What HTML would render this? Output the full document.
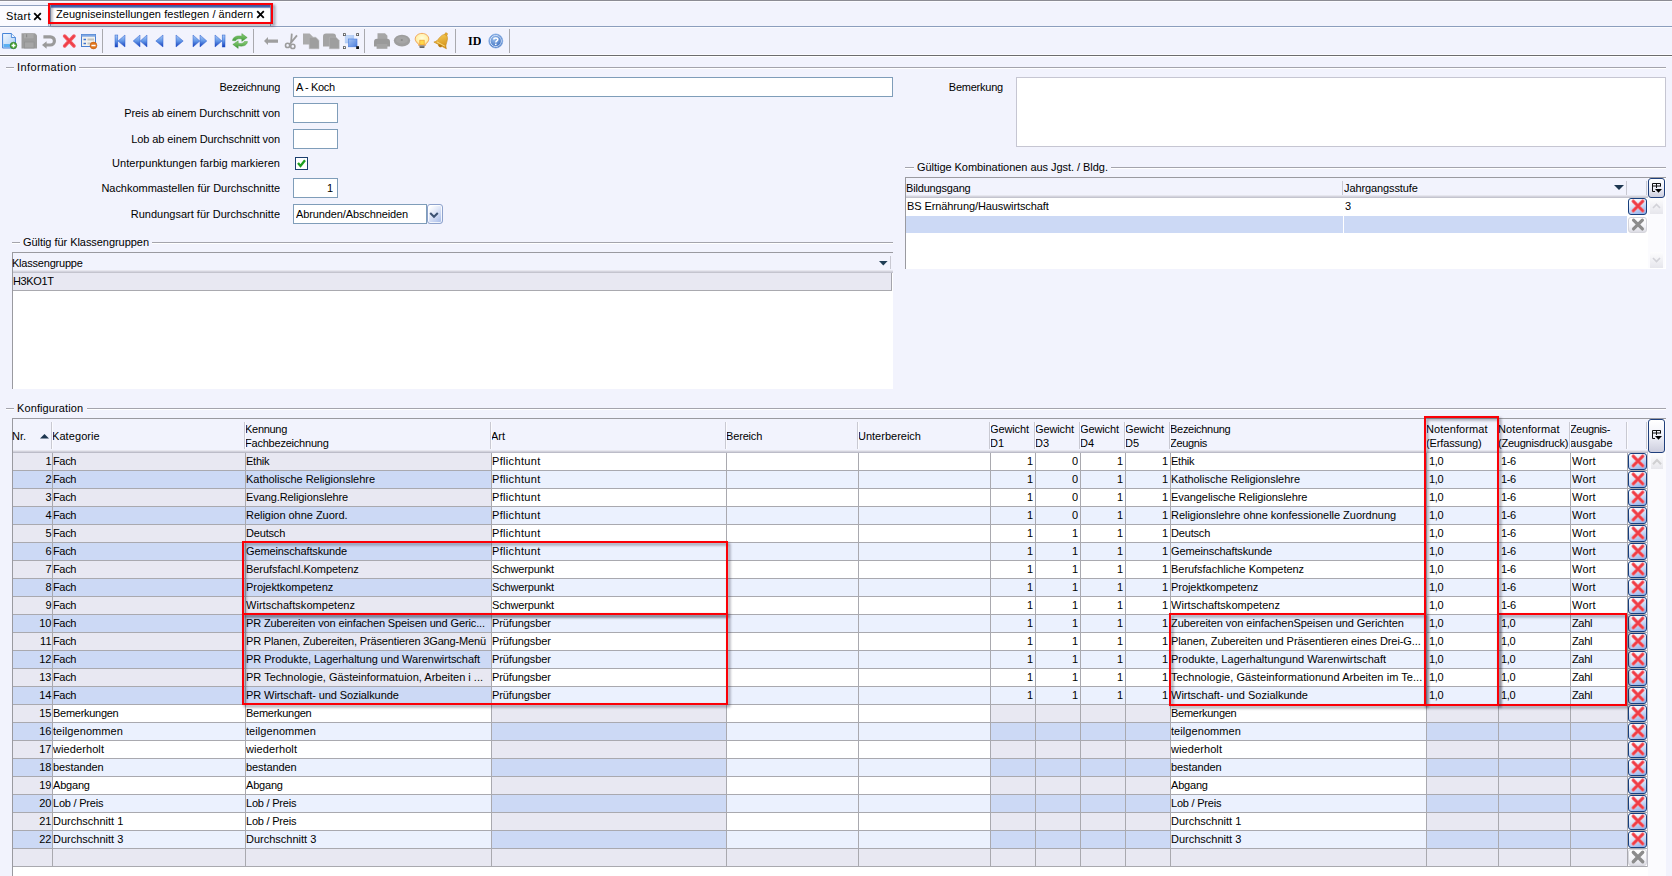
<!DOCTYPE html><html lang="de"><head><meta charset="utf-8"><title>Zeugniseinstellungen festlegen / ändern</title><style>
html,body{margin:0;padding:0;}
body{width:1672px;height:876px;overflow:hidden;background:#f2f3fd;font-family:"Liberation Sans",sans-serif;font-size:11px;color:#000;position:relative;}
div{position:absolute;box-sizing:border-box;}
.t{white-space:nowrap;overflow:hidden;}
.r{text-align:right;}
svg{position:absolute;overflow:visible;}
.inp{background:#fff;border:1px solid #7f9db9;}
.gl{background:#a9a9af;height:1px;}
.hs{background:#c9c9d2;width:1px;}
.red{border:2px solid #fb0007;filter:drop-shadow(2px 2px 1.5px rgba(40,40,60,.55));}
.del{border:1px solid #173e7c;border-radius:3px;background:linear-gradient(160deg,#ffffff 5%,#dfe8fa 40%,#8aaae8 100%);}
.delg{border:1px solid #d5d5dc;border-radius:3px;background:linear-gradient(#ffffff 0%,#f4f4f8 60%,#dcdce4 100%);}
</style></head><body>
<svg width="0" height="0" style="left:0;top:0"><defs>
<linearGradient id="gb" x1="0" y1="0" x2="0" y2="1"><stop offset="0" stop-color="#8fb4ee"/><stop offset="1" stop-color="#1b55c0"/></linearGradient>
<linearGradient id="gg" x1="0" y1="0" x2="0" y2="1"><stop offset="0" stop-color="#b9b9b9"/><stop offset="1" stop-color="#8d8d8d"/></linearGradient>
<symbol id="xr" viewBox="0 0 19 17"><path d="M5.3 3.3 L14.7 12.7 M14.7 3.3 L5.3 12.7" stroke="#f67a80" stroke-width="3.7" stroke-linecap="round" fill="none"/><path d="M5.3 3.3 L14.7 12.7 M14.7 3.3 L5.3 12.7" stroke="#ee3b45" stroke-width="2" stroke-linecap="round" fill="none"/></symbol>
<symbol id="xg" viewBox="0 0 19 17"><path d="M5.3 3.3 L14.7 12.7 M14.7 3.3 L5.3 12.7" stroke="#8c8c8c" stroke-width="3.4" stroke-linecap="round" fill="none"/></symbol>
</defs></svg>
<div style="left:0px;top:0px;width:1672px;height:1px;background:#8c8c94;"></div>
<div style="left:0px;top:1px;width:1672px;height:1px;background:#fbfbff;"></div>
<div style="left:0px;top:26px;width:1672px;height:1px;background:#8c9ebd;"></div>
<div style="left:0px;top:27px;width:1672px;height:1px;background:#fbfbff;"></div>
<div style="left:0px;top:5px;width:49px;height:21px;background:#fbfbff;border-top:1px solid #8e9fbf;border-right:1px solid #a9b7d2;"></div>
<div class="t" style="left:6px;top:8px;height:16px;line-height:16px;letter-spacing:0.35px;">Start</div>
<svg style="left:33px;top:11.5px" width="9" height="9" viewBox="0 0 9 9"><path d="M1.2 1.2 L7.8 7.8 M7.8 1.2 L1.2 7.8" stroke="#000" stroke-width="1.8" fill="none"/></svg>
<div style="left:50px;top:5px;width:221px;height:21px;background:linear-gradient(#3f63c0 0,#5b7fd6 2px,#ffffff 3.5px,#ffffff 100%);border-left:1px solid #8e9fbf;border-right:1px solid #8e9fbf;"></div>
<div class="t" style="left:56px;top:6px;height:16px;line-height:16px;letter-spacing:0.054px;">Zeugniseinstellungen festlegen / ändern</div>
<svg style="left:255.5px;top:9.5px" width="9" height="9" viewBox="0 0 9 9"><path d="M1.2 1.2 L7.8 7.8 M7.8 1.2 L1.2 7.8" stroke="#000" stroke-width="1.8" fill="none"/></svg>
<div class="red" style="left:48px;top:3px;width:225px;height:21px;"></div>
<div style="left:0px;top:54px;width:1672px;height:1px;background:#fbfbff;"></div>
<div style="left:0px;top:55px;width:1672px;height:1px;background:#6c6c6e;"></div>
<div style="left:0px;top:56px;width:1672px;height:1px;background:#ffffff;"></div>
<div style="left:102px;top:29px;width:1px;height:24px;background:#a9a9ae;"></div>
<div style="left:253px;top:29px;width:1px;height:24px;background:#a9a9ae;"></div>
<div style="left:364px;top:29px;width:1px;height:24px;background:#a9a9ae;"></div>
<div style="left:455px;top:29px;width:1px;height:24px;background:#a9a9ae;"></div>
<div style="left:509px;top:29px;width:1px;height:24px;background:#a9a9ae;"></div>
<svg style="left:0;top:28px" width="520" height="26" viewBox="0 28 520 26">
<defs>
<linearGradient id="nb" x1="0" y1="0" x2="0" y2="1"><stop offset="0" stop-color="#a9caf5"/><stop offset="0.5" stop-color="#6398e8"/><stop offset="1" stop-color="#1238b8"/></linearGradient>
<linearGradient id="pg" x1="0" y1="0" x2="1" y2="1"><stop offset="0" stop-color="#f4f9ff"/><stop offset="1" stop-color="#a9cbf2"/></linearGradient>
<linearGradient id="gr" x1="0" y1="0" x2="0" y2="1"><stop offset="0" stop-color="#b4b4b4"/><stop offset="1" stop-color="#8f8f8f"/></linearGradient>
<linearGradient id="sq1" x1="0" y1="0" x2="1" y2="1"><stop offset="0" stop-color="#cfe0fa"/><stop offset="1" stop-color="#9dbdf0"/></linearGradient>
<linearGradient id="sq2" x1="0" y1="0" x2="1" y2="1"><stop offset="0" stop-color="#a6c3f2"/><stop offset="1" stop-color="#4d7fdc"/></linearGradient>
<linearGradient id="gn" x1="0" y1="0" x2="0" y2="1"><stop offset="0" stop-color="#8fd07a"/><stop offset="1" stop-color="#3f9a38"/></linearGradient>
<radialGradient id="hp" cx="0.4" cy="0.35" r="0.7"><stop offset="0" stop-color="#9cc0ee"/><stop offset="1" stop-color="#2f63b8"/></radialGradient>
<radialGradient id="bl" cx="0.5" cy="0.4" r="0.6"><stop offset="0" stop-color="#fffde0"/><stop offset="0.7" stop-color="#fff0a8"/><stop offset="1" stop-color="#f6c070"/></radialGradient>
<linearGradient id="be" x1="0" y1="0" x2="1" y2="1"><stop offset="0" stop-color="#fbd560"/><stop offset="1" stop-color="#d08a10"/></linearGradient>
</defs>
<!-- new document -->
<path d="M2.6 33.5 H11.4 L15.4 37.5 V48 H2.6 Z" fill="url(#pg)" stroke="#4584d8" stroke-width="1" stroke-linejoin="round"/>
<path d="M11.4 33.5 V37.5 H15.4" fill="#eef5ff" stroke="#4584d8" stroke-width="0.9"/>
<rect x="3.6" y="44" width="8" height="3" fill="#5cb0f2"/>
<circle cx="13.5" cy="45.5" r="3.3" fill="#46a030" stroke="#2d7a20" stroke-width="0.6"/>
<path d="M11.5 45.5 H15.5 M13.5 43.5 V47.5" stroke="#fff" stroke-width="1.5"/>
<!-- save (disabled) -->
<path d="M21.5 33.3 H35 L37 35.3 V48.5 H21.5 Z" fill="#9c9c9c"/>
<rect x="24" y="33.3" width="9.5" height="5" fill="#a9a9a9"/>
<rect x="26" y="34.3" width="1.2" height="3" fill="#8a8a8a"/>
<rect x="24.5" y="42" width="9.5" height="6" fill="#a6a6a6" stroke="#8e8e8e" stroke-width="0.6"/>
<!-- undo (disabled) -->
<path d="M43.4 35.2 H50.3 A5.7 5.7 0 0 1 50.3 46.6 H46.6 V48.8 L42 45 L46.6 41.2 V43.4 H50.3 A2.5 2.5 0 0 0 50.3 38.4 H43.4 Z" fill="#9a9a9a"/>
<!-- red X -->
<path d="M64.6 36 L74 46 M74 36 L64.6 46" stroke="#f25a62" stroke-width="3.5" stroke-linecap="round"/>
<path d="M64.6 36 L74 46 M74 36 L64.6 46" stroke="#f03a44" stroke-width="1.4" stroke-linecap="round"/>
<!-- form minus -->
<rect x="81.5" y="34.5" width="14" height="12" fill="#f3f2ee" stroke="#4a7fd0" stroke-width="1"/>
<rect x="81.5" y="34.5" width="14" height="2.2" fill="#7fa8e4"/>
<path d="M83.5 39.5 H86 M83.5 43.5 H86" stroke="#3f74d0" stroke-width="1.3"/>
<path d="M87.5 39.5 H94 M87.5 43.5 H91" stroke="#c4c4c0" stroke-width="2"/>
<circle cx="93.5" cy="45.5" r="3.4" fill="#e2761c" stroke="#c25a0c" stroke-width="0.6"/>
<path d="M91.4 45.5 H95.6" stroke="#fff" stroke-width="1.5"/>
<!-- nav icons -->
<g fill="url(#nb)" stroke="#2c5fd0" stroke-width="0.5">
<rect x="115" y="35" width="2.8" height="12"/><path d="M125 35 V47 L118 41 Z"/>
<path d="M140 35 V47 L133.2 41 Z"/><path d="M147 35 V47 L140.2 41 Z"/>
<path d="M163 35 V47 L155.8 41 Z"/>
<path d="M176 35 V47 L183.2 41 Z"/>
<path d="M193 35 V47 L199.8 41 Z"/><path d="M200 35 V47 L206.8 41 Z"/>
<path d="M215 35 V47 L222 41 Z"/><rect x="222.2" y="35" width="2.8" height="12"/>
</g>
<!-- refresh -->
<g fill="url(#gn)" stroke="#3a9030" stroke-width="0.4">
<path d="M232.5 40.6 C233 36.6 237 35.2 241.8 36.2 V33.6 L247.2 37.6 L241.8 41.4 V39 C238.6 38.4 236.6 38.8 235.6 40.8 Z"/>
<path d="M247.5 41.6 C247 45.6 243 46.8 238.2 45.8 V48.4 L232.8 44.4 L238.2 40.8 V43.2 C241.4 43.8 243.4 43.4 244.4 41.4 Z"/>
</g>
<!-- back arrow (disabled) -->
<path d="M264 41 L268 37 V39.4 H278 V42.8 H268 V45 Z" fill="#9f9f9f"/>
<!-- scissors (disabled) -->
<g stroke="#9c9c9c" fill="none">
<path d="M291.8 33.6 L291 43.4 M297 35.4 L289.6 44.4" stroke-width="1.8"/>
<circle cx="287.6" cy="45.4" r="2.1" stroke-width="1.6"/>
<circle cx="292.8" cy="46.4" r="2.1" stroke-width="1.6"/>
</g>
<!-- copy (disabled) -->
<path d="M303 33.5 H309.6 L312.6 36.5 V44.6 H303 Z" fill="#ababab"/>
<path d="M309.2 37.2 H315.8 L319 40.4 V48.8 H309.2 Z" fill="#9e9e9e" stroke="#b8b8b8" stroke-width="0.5"/>
<!-- paste (disabled) -->
<path d="M323 36.5 Q323 33.5 326 33.5 H333 Q336 33.5 336 36.5 V46.5 H323 Z" fill="#a4a4a4"/>
<path d="M329.4 37.2 H336 L339.2 40.4 V48.8 H329.4 Z" fill="#9e9e9e" stroke="#b8b8b8" stroke-width="0.5"/>
<!-- select all -->
<rect x="345.2" y="35.4" width="8.6" height="7.6" fill="url(#sq1)" stroke="#a9c6f4" stroke-width="0.6"/>
<rect x="348.4" y="39" width="8.6" height="7.8" fill="url(#sq2)" stroke="#4a7cdc" stroke-width="0.6"/>
<g fill="#fff" stroke="#555" stroke-width="0.8">
<rect x="343.4" y="33.6" width="2" height="2"/><rect x="356.6" y="33.6" width="2" height="2"/><rect x="343.4" y="46.6" width="2" height="2"/></g>
<rect x="356.2" y="46.2" width="2.8" height="2.8" fill="#111"/>
<!-- printer (disabled) -->
<path d="M377.5 33.3 H385 L387.4 35.8 V40 H377.5 Z" fill="#a6a6a6"/>
<path d="M374 42 Q374 38.8 377 38.8 H387 Q390 38.8 390 42 V46.6 H374 Z" fill="#9a9a9a"/>
<rect x="376.6" y="44" width="10.8" height="4.8" fill="#a4a4a4"/>
<!-- oval (disabled) -->
<ellipse cx="402" cy="40.6" rx="8.2" ry="5.8" fill="#9e9e9e"/>
<ellipse cx="402" cy="40" rx="6" ry="3.6" fill="#a6a6a6"/>
<circle cx="401.8" cy="40" r="1.1" fill="#8a8a8a"/>
<!-- bulb -->
<path d="M422 33.4 C426 33.4 428.8 36 428.8 39.2 C428.8 41.6 426.6 42.8 425.6 44.6 V45.4 H418.6 V44.6 C417.6 42.8 415.2 41.6 415.2 39.2 C415.2 36 418 33.4 422 33.4 Z" fill="url(#bl)" stroke="#f0a254" stroke-width="0.9"/>
<rect x="419.8" y="40.2" width="4.4" height="4.6" fill="#ffd84a" stroke="#f0a030" stroke-width="0.7"/>
<rect x="419.2" y="45.2" width="5.6" height="2.6" fill="#9a9a9a"/>
<rect x="420" y="46.6" width="4" height="1.2" fill="#555"/>
<!-- bell -->
<g transform="translate(1 0) rotate(28 441.5 41)">
<path d="M441.5 33.6 C444.8 34.6 445.6 38.6 446.2 42 C446.6 44 447.6 45 448.6 46 H434.4 C435.4 45 436.4 44 436.8 42 C437.4 38.6 438.2 34.6 441.5 33.6 Z" fill="url(#be)" stroke="#c98a18" stroke-width="0.6"/>
<circle cx="441.5" cy="33.2" r="1.3" fill="#e9ae2c" stroke="#c98a18" stroke-width="0.5"/>
<ellipse cx="441.5" cy="46.4" rx="2" ry="1.3" fill="#b87a10"/>
<path d="M437 44.4 H446" stroke="#fbe08a" stroke-width="0.8"/>
</g>
<!-- help -->
<circle cx="495.8" cy="41" r="7" fill="url(#hp)" stroke="#88aee4" stroke-width="0.8"/>
<circle cx="495.8" cy="41" r="5.6" fill="none" stroke="#dbe8fa" stroke-width="0.9"/>
<path d="M493.8 39.4 C493.8 37.4 497.8 37.4 497.8 39.4 C497.8 40.8 495.8 40.8 495.8 42.4" fill="none" stroke="#fff" stroke-width="1.5"/>
<circle cx="495.8" cy="44.3" r="0.9" fill="#fff"/>
</svg>
<div class="t" style="left:468px;top:33px;height:16px;line-height:16px;font-family:'Liberation Serif',serif;font-weight:bold;font-size:12px;">ID</div>

<div style="left:6px;top:67px;width:8px;height:1px;background:#a4a4ac;"></div>
<div style="left:6px;top:68px;width:8px;height:1px;background:#ffffff;"></div>
<div class="t" style="left:17px;top:59px;height:16px;line-height:16px;letter-spacing:0.399px;">Information</div>
<div style="left:79px;top:67px;width:1587px;height:1px;background:#a4a4ac;"></div>
<div style="left:79px;top:68px;width:1587px;height:1px;background:#ffffff;"></div>
<div style="left:12px;top:242px;width:8px;height:1px;background:#a4a4ac;"></div>
<div style="left:12px;top:243px;width:8px;height:1px;background:#ffffff;"></div>
<div class="t" style="left:23px;top:234px;height:16px;line-height:16px;letter-spacing:-0.049px;">Gültig für Klassengruppen</div>
<div style="left:152px;top:242px;width:741px;height:1px;background:#a4a4ac;"></div>
<div style="left:152px;top:243px;width:741px;height:1px;background:#ffffff;"></div>
<div style="left:905px;top:167px;width:9px;height:1px;background:#a4a4ac;"></div>
<div style="left:905px;top:168px;width:9px;height:1px;background:#ffffff;"></div>
<div class="t" style="left:917px;top:159px;height:16px;line-height:16px;letter-spacing:-0.044px;">Gültige Kombinationen aus Jgst. / Bldg.</div>
<div style="left:1111px;top:167px;width:555px;height:1px;background:#a4a4ac;"></div>
<div style="left:1111px;top:168px;width:555px;height:1px;background:#ffffff;"></div>
<div style="left:6px;top:408px;width:8px;height:1px;background:#a4a4ac;"></div>
<div style="left:6px;top:409px;width:8px;height:1px;background:#ffffff;"></div>
<div class="t" style="left:17px;top:400px;height:16px;line-height:16px;letter-spacing:0.108px;">Konfiguration</div>
<div style="left:87px;top:408px;width:1579px;height:1px;background:#a4a4ac;"></div>
<div style="left:87px;top:409px;width:1579px;height:1px;background:#ffffff;"></div>
<div class="t r" style="left:0px;top:79px;height:16px;line-height:16px;width:280px;letter-spacing:-0.289px;">Bezeichnung</div>
<div class="t r" style="left:0px;top:105px;height:16px;line-height:16px;width:280px;letter-spacing:-0.081px;">Preis ab einem Durchschnitt von</div>
<div class="t r" style="left:0px;top:131px;height:16px;line-height:16px;width:280px;letter-spacing:-0.101px;">Lob ab einem Durchschnitt von</div>
<div class="t r" style="left:0px;top:155px;height:16px;line-height:16px;width:280px;letter-spacing:0.032px;">Unterpunktungen farbig markieren</div>
<div class="t r" style="left:0px;top:180px;height:16px;line-height:16px;width:280px;letter-spacing:-0.034px;">Nachkommastellen für Durchschnitte</div>
<div class="t r" style="left:0px;top:206px;height:16px;line-height:16px;width:280px;">Rundungsart für Durchschnitte</div>
<div class="inp" style="left:293px;top:77px;width:600px;height:20px;"></div>
<div class="t" style="left:296px;top:79px;height:16px;line-height:16px;letter-spacing:-0.35px;">A - Koch</div>
<div class="inp" style="left:293px;top:103px;width:45px;height:20px;"></div>
<div class="inp" style="left:293px;top:129px;width:45px;height:20px;"></div>
<div style="left:295px;top:157px;width:13px;height:13px;background:#fff;border:1px solid #1c3f6e;"></div>
<svg style="left:297px;top:159px" width="9" height="9" viewBox="0 0 9 9"><path d="M1 4 L3.5 7 L8 1.2" stroke="#1fa01f" stroke-width="2.3" fill="none"/></svg>
<div class="inp" style="left:293px;top:178px;width:45px;height:20px;"></div>
<div class="t r" style="left:296px;top:180px;height:16px;line-height:16px;width:37px;">1</div>
<div class="inp" style="left:293px;top:204px;width:134px;height:20px;"></div>
<div class="t" style="left:296px;top:206px;height:16px;line-height:16px;letter-spacing:-0.118px;">Abrunden/Abschneiden</div>
<div style="left:427px;top:204px;width:16px;height:20px;border:1px solid #8ea2cc;border-radius:3px;background:linear-gradient(135deg,#ffffff 10%,#dfe6f8 45%,#a3b8e8 100%);box-shadow:inset 0 0 0 1px rgba(255,255,255,.8);"></div>
<svg style="left:429px;top:212px" width="10" height="7" viewBox="0 0 10 7"><path d="M1.2 1 L5 4.8 L8.8 1" stroke="#3d5273" stroke-width="2" fill="none"/></svg>
<div class="t r" style="left:0px;top:79px;height:16px;line-height:16px;width:1003px;letter-spacing:-0.229px;">Bemerkung</div>
<div style="left:1016px;top:77px;width:650px;height:70px;background:#fff;border:1px solid #c6c6d2;"></div>
<div style="left:12px;top:252px;width:881px;height:137px;background:#fff;border-left:1px solid #9a9aa0;border-top:1px solid #9a9aa0;"></div>
<div style="left:13px;top:253px;width:880px;height:17px;background:#f2f3fd;"></div>
<div class="t" style="left:12px;top:255px;height:16px;line-height:16px;letter-spacing:-0.214px;">Klassengruppe</div>
<svg style="left:879px;top:261px" width="9" height="5" viewBox="0 0 9 5"><path d="M0 0 L8.6 0 L4.3 4.4 Z" fill="#1f3d55"/></svg>
<div class="hs" style="left:890px;top:256px;width:1px;height:13px;"></div>
<div style="left:13px;top:270px;width:880px;height:1px;background:#e6e6ee;"></div>
<div style="left:13px;top:271px;width:880px;height:1px;background:#d4d4de;"></div>
<div style="left:13px;top:272px;width:880px;height:1px;background:#c4c4ce;"></div>
<div style="left:13px;top:273px;width:878px;height:17px;background:#e8e8f2;"></div>
<div class="gl" style="left:13px;top:290px;width:879px;height:1px;"></div>
<div style="left:891px;top:273px;width:1px;height:17px;background:#a4a4ac;"></div>
<div class="t" style="left:13px;top:273px;height:17px;line-height:17px;letter-spacing:-0.35px;">H3KO1T</div>
<div style="left:905px;top:177px;width:761px;height:92px;background:#fff;border-left:1px solid #9a9aa0;border-top:1px solid #9a9aa0;"></div>
<div style="left:906px;top:178px;width:742px;height:18px;background:#f2f3fd;"></div>
<div class="t" style="left:906px;top:180px;height:16px;line-height:16px;letter-spacing:-0.177px;">Bildungsgang</div>
<div class="t" style="left:1344px;top:180px;height:16px;line-height:16px;letter-spacing:-0.108px;">Jahrgangsstufe</div>
<div class="hs" style="left:1342px;top:181px;width:1px;height:14px;"></div>
<div class="hs" style="left:1626px;top:181px;width:1px;height:14px;"></div>
<div class="hs" style="left:1646px;top:181px;width:1px;height:14px;"></div>
<svg style="left:1614px;top:185px" width="10" height="5" viewBox="0 0 10 5"><path d="M0 0 L10 0 L5 5 Z" fill="#1d3650"/></svg>
<div style="left:906px;top:195px;width:742px;height:1px;background:#e6e6ee;"></div>
<div style="left:906px;top:196px;width:742px;height:1px;background:#d4d4de;"></div>
<div style="left:906px;top:197px;width:742px;height:1px;background:#c4c4ce;"></div>
<div class="t" style="left:907px;top:198px;height:17px;line-height:17px;letter-spacing:-0.097px;">BS Ernährung/Hauswirtschaft</div>
<div class="t" style="left:1345px;top:198px;height:17px;line-height:17px;">3</div>
<div style="left:906px;top:216px;width:437px;height:17px;background:#ccd9f5;"></div>
<div style="left:1344px;top:216px;width:283px;height:17px;background:#ccd9f5;"></div>
<div class="del" style="left:1628px;top:198px;width:19px;height:17px;"></div>
<svg style="left:1628px;top:198px" width="19" height="17"><use href="#xr" width="19" height="17"/></svg>
<div class="delg" style="left:1628px;top:217px;width:19px;height:16px;"></div>
<svg style="left:1628px;top:217px" width="19" height="16"><use href="#xg" width="19" height="16"/></svg>
<div style="left:1648px;top:178px;width:17px;height:20px;border:1px solid #1f3f7c;border-radius:3px;background:linear-gradient(#ffffff,#f2f3fa 45%,#cdcede);"></div>
<svg style="left:1652px;top:183px" width="11" height="11" viewBox="0 0 11 11"><path d="M0.5 0.5 H8.5 V3.5 M0.5 0.5 V8.5 H3 M0.5 3 H8.5 M4.5 0.5 V5" stroke="#111" stroke-width="1" fill="none"/><path d="M3 6 H10 L6.5 9.8 Z" fill="#000"/></svg>
<div style="left:1648px;top:198px;width:17px;height:70px;background:#fbfbfe;"></div>
<div style="left:1650px;top:198px;width:13px;height:16px;background:linear-gradient(#fdfdfe,#e6e6ec);"></div>
<svg style="left:1652px;top:203px" width="9" height="6" viewBox="0 0 9 6"><path d="M1 5 L4.5 1.5 L8 5" stroke="#d2d2d8" stroke-width="1.6" fill="none"/></svg>
<div style="left:1650px;top:252px;width:13px;height:16px;background:linear-gradient(#fdfdfe,#e6e6ec);"></div>
<svg style="left:1652px;top:257px" width="9" height="6" viewBox="0 0 9 6"><path d="M1 1 L4.5 4.5 L8 1" stroke="#d2d2d8" stroke-width="1.6" fill="none"/></svg>
<div style="left:12px;top:418px;width:1654px;height:458px;background:#fff;border-left:1px solid #9a9aa0;border-top:1px solid #9a9aa0;"></div>
<div style="left:13px;top:419px;width:1635px;height:32px;background:#f2f3fd;"></div>
<div style="left:1648px;top:419px;width:18px;height:457px;background:#fbfbfe;"></div>
<div class="t" style="left:12px;top:428px;height:16px;line-height:16px;width:39px;">Nr.</div>
<div class="t" style="left:52px;top:428px;height:16px;line-height:16px;width:192px;letter-spacing:0.079px;">Kategorie</div>
<div class="t" style="left:245px;top:421px;height:16px;line-height:16px;width:245px;letter-spacing:-0.288px;">Kennung</div>
<div class="t" style="left:245px;top:435px;height:16px;line-height:16px;width:245px;letter-spacing:-0.216px;">Fachbezeichnung</div>
<div class="t" style="left:491px;top:428px;height:16px;line-height:16px;width:234px;">Art</div>
<div class="t" style="left:726px;top:428px;height:16px;line-height:16px;width:131px;letter-spacing:-0.163px;">Bereich</div>
<div class="t" style="left:858px;top:428px;height:16px;line-height:16px;width:131px;">Unterbereich</div>
<div class="t" style="left:990px;top:421px;height:16px;line-height:16px;width:44px;letter-spacing:-0.13px;">Gewicht</div>
<div class="t" style="left:990px;top:435px;height:16px;line-height:16px;width:44px;">D1</div>
<div class="t" style="left:1035px;top:421px;height:16px;line-height:16px;width:44px;letter-spacing:-0.13px;">Gewicht</div>
<div class="t" style="left:1035px;top:435px;height:16px;line-height:16px;width:44px;">D3</div>
<div class="t" style="left:1080px;top:421px;height:16px;line-height:16px;width:44px;letter-spacing:-0.13px;">Gewicht</div>
<div class="t" style="left:1080px;top:435px;height:16px;line-height:16px;width:44px;">D4</div>
<div class="t" style="left:1125px;top:421px;height:16px;line-height:16px;width:44px;letter-spacing:-0.13px;">Gewicht</div>
<div class="t" style="left:1125px;top:435px;height:16px;line-height:16px;width:44px;">D5</div>
<div class="t" style="left:1170px;top:421px;height:16px;line-height:16px;width:255px;letter-spacing:-0.289px;">Bezeichnung</div>
<div class="t" style="left:1170px;top:435px;height:16px;line-height:16px;width:255px;letter-spacing:-0.306px;">Zeugnis</div>
<div class="t" style="left:1426px;top:421px;height:16px;line-height:16px;width:71px;letter-spacing:0.113px;">Notenformat</div>
<div class="t" style="left:1426px;top:435px;height:16px;line-height:16px;width:71px;letter-spacing:-0.119px;">(Erfassung)</div>
<div class="t" style="left:1498px;top:421px;height:16px;line-height:16px;width:71px;letter-spacing:0.113px;">Notenformat</div>
<div class="t" style="left:1498px;top:435px;height:16px;line-height:16px;width:71px;letter-spacing:-0.223px;">(Zeugnisdruck)</div>
<div class="t" style="left:1570px;top:421px;height:16px;line-height:16px;width:56px;letter-spacing:-0.35px;">Zeugnis-</div>
<div class="t" style="left:1570px;top:435px;height:16px;line-height:16px;width:56px;letter-spacing:0.069px;">ausgabe</div>
<div class="hs" style="left:51px;top:422px;width:1px;height:27px;"></div>
<div style="left:52px;top:422px;width:1px;height:27px;background:#fbfbff;"></div>
<div class="hs" style="left:244px;top:422px;width:1px;height:27px;"></div>
<div style="left:245px;top:422px;width:1px;height:27px;background:#fbfbff;"></div>
<div class="hs" style="left:490px;top:422px;width:1px;height:27px;"></div>
<div style="left:491px;top:422px;width:1px;height:27px;background:#fbfbff;"></div>
<div class="hs" style="left:725px;top:422px;width:1px;height:27px;"></div>
<div style="left:726px;top:422px;width:1px;height:27px;background:#fbfbff;"></div>
<div class="hs" style="left:857px;top:422px;width:1px;height:27px;"></div>
<div style="left:858px;top:422px;width:1px;height:27px;background:#fbfbff;"></div>
<div class="hs" style="left:989px;top:422px;width:1px;height:27px;"></div>
<div style="left:990px;top:422px;width:1px;height:27px;background:#fbfbff;"></div>
<div class="hs" style="left:1034px;top:422px;width:1px;height:27px;"></div>
<div style="left:1035px;top:422px;width:1px;height:27px;background:#fbfbff;"></div>
<div class="hs" style="left:1079px;top:422px;width:1px;height:27px;"></div>
<div style="left:1080px;top:422px;width:1px;height:27px;background:#fbfbff;"></div>
<div class="hs" style="left:1124px;top:422px;width:1px;height:27px;"></div>
<div style="left:1125px;top:422px;width:1px;height:27px;background:#fbfbff;"></div>
<div class="hs" style="left:1169px;top:422px;width:1px;height:27px;"></div>
<div style="left:1170px;top:422px;width:1px;height:27px;background:#fbfbff;"></div>
<div class="hs" style="left:1425px;top:422px;width:1px;height:27px;"></div>
<div style="left:1426px;top:422px;width:1px;height:27px;background:#fbfbff;"></div>
<div class="hs" style="left:1497px;top:422px;width:1px;height:27px;"></div>
<div style="left:1498px;top:422px;width:1px;height:27px;background:#fbfbff;"></div>
<div class="hs" style="left:1569px;top:422px;width:1px;height:27px;"></div>
<div style="left:1570px;top:422px;width:1px;height:27px;background:#fbfbff;"></div>
<div class="hs" style="left:1626px;top:422px;width:1px;height:27px;"></div>
<div style="left:1627px;top:422px;width:1px;height:27px;background:#fbfbff;"></div>
<div class="hs" style="left:1646px;top:422px;width:1px;height:27px;"></div>
<div style="left:1647px;top:422px;width:1px;height:27px;background:#fbfbff;"></div>
<svg style="left:40px;top:434px" width="9" height="5" viewBox="0 0 9 5"><path d="M0 4.6 L9 4.6 L4.5 0 Z" fill="#1d3650"/></svg>
<div style="left:13px;top:450px;width:1635px;height:1px;background:#e6e6ee;"></div>
<div style="left:13px;top:451px;width:1635px;height:1px;background:#d2d2dc;"></div>
<div style="left:13px;top:452px;width:1635px;height:1px;background:#bcbcc8;"></div>
<div style="left:1648px;top:419px;width:17px;height:34px;border:1px solid #1f3f7c;border-radius:3px;background:linear-gradient(#ffffff,#f2f3fa 45%,#cdcede);"></div>
<svg style="left:1652px;top:430px" width="11" height="11" viewBox="0 0 11 11"><path d="M0.5 0.5 H8.5 V3.5 M0.5 0.5 V8.5 H3 M0.5 3 H8.5 M4.5 0.5 V5" stroke="#111" stroke-width="1" fill="none"/><path d="M3 6 H10 L6.5 9.8 Z" fill="#000"/></svg>
<div style="left:13px;top:453px;width:39px;height:17px;background:#e8e8f2;"></div>
<div style="left:53px;top:453px;width:192px;height:17px;background:#e8e8f2;"></div>
<div style="left:246px;top:453px;width:245px;height:17px;background:#e8e8f2;"></div>
<div style="left:492px;top:453px;width:234px;height:17px;background:#ffffff;"></div>
<div style="left:727px;top:453px;width:131px;height:17px;background:#ffffff;"></div>
<div style="left:859px;top:453px;width:131px;height:17px;background:#ffffff;"></div>
<div style="left:991px;top:453px;width:44px;height:17px;background:#ffffff;"></div>
<div style="left:1036px;top:453px;width:44px;height:17px;background:#ffffff;"></div>
<div style="left:1081px;top:453px;width:44px;height:17px;background:#ffffff;"></div>
<div style="left:1126px;top:453px;width:44px;height:17px;background:#ffffff;"></div>
<div style="left:1171px;top:453px;width:255px;height:17px;background:#ffffff;"></div>
<div style="left:1427px;top:453px;width:71px;height:17px;background:#ffffff;"></div>
<div style="left:1499px;top:453px;width:71px;height:17px;background:#ffffff;"></div>
<div style="left:1571px;top:453px;width:56px;height:17px;background:#ffffff;"></div>
<div class="gl" style="left:13px;top:470px;width:1635px;height:1px;"></div>
<div class="del" style="left:1628px;top:453px;width:19px;height:17px;"></div>
<svg style="left:1628px;top:453px" width="19" height="17"><use href="#xr" width="19" height="17"/></svg>
<div class="t r" style="left:13px;top:453px;height:17px;line-height:17px;width:38.5px;">1</div>
<div class="t" style="left:53px;top:453px;height:17px;line-height:17px;width:190px;letter-spacing:-0.35px;">Fach</div>
<div class="t" style="left:246px;top:453px;height:17px;line-height:17px;width:243px;letter-spacing:-0.214px;">Ethik</div>
<div class="t" style="left:492px;top:453px;height:17px;line-height:17px;width:232px;letter-spacing:0.334px;">Pflichtunt</div>
<div class="t r" style="left:991px;top:453px;height:17px;line-height:17px;width:42px;">1</div>
<div class="t r" style="left:1036px;top:453px;height:17px;line-height:17px;width:42px;">0</div>
<div class="t r" style="left:1081px;top:453px;height:17px;line-height:17px;width:42px;">1</div>
<div class="t r" style="left:1126px;top:453px;height:17px;line-height:17px;width:42px;">1</div>
<div class="t" style="left:1171px;top:453px;height:17px;line-height:17px;width:253px;letter-spacing:-0.214px;">Ethik</div>
<div class="t" style="left:1429px;top:453px;height:17px;line-height:17px;width:67px;letter-spacing:-0.35px;">1,0</div>
<div class="t" style="left:1501px;top:453px;height:17px;line-height:17px;width:67px;letter-spacing:-0.35px;">1-6</div>
<div class="t" style="left:1572px;top:453px;height:17px;line-height:17px;width:53px;letter-spacing:0.212px;">Wort</div>
<div style="left:13px;top:471px;width:39px;height:17px;background:#ccd9f5;"></div>
<div style="left:53px;top:471px;width:192px;height:17px;background:#ccd9f5;"></div>
<div style="left:246px;top:471px;width:245px;height:17px;background:#ccd9f5;"></div>
<div style="left:492px;top:471px;width:234px;height:17px;background:#ebf1fe;"></div>
<div style="left:727px;top:471px;width:131px;height:17px;background:#ebf1fe;"></div>
<div style="left:859px;top:471px;width:131px;height:17px;background:#ebf1fe;"></div>
<div style="left:991px;top:471px;width:44px;height:17px;background:#ebf1fe;"></div>
<div style="left:1036px;top:471px;width:44px;height:17px;background:#ebf1fe;"></div>
<div style="left:1081px;top:471px;width:44px;height:17px;background:#ebf1fe;"></div>
<div style="left:1126px;top:471px;width:44px;height:17px;background:#ebf1fe;"></div>
<div style="left:1171px;top:471px;width:255px;height:17px;background:#ebf1fe;"></div>
<div style="left:1427px;top:471px;width:71px;height:17px;background:#ebf1fe;"></div>
<div style="left:1499px;top:471px;width:71px;height:17px;background:#ebf1fe;"></div>
<div style="left:1571px;top:471px;width:56px;height:17px;background:#ebf1fe;"></div>
<div class="gl" style="left:13px;top:488px;width:1635px;height:1px;"></div>
<div class="del" style="left:1628px;top:471px;width:19px;height:17px;"></div>
<svg style="left:1628px;top:471px" width="19" height="17"><use href="#xr" width="19" height="17"/></svg>
<div class="t r" style="left:13px;top:471px;height:17px;line-height:17px;width:38.5px;">2</div>
<div class="t" style="left:53px;top:471px;height:17px;line-height:17px;width:190px;letter-spacing:-0.35px;">Fach</div>
<div class="t" style="left:246px;top:471px;height:17px;line-height:17px;width:243px;letter-spacing:-0.025px;">Katholische Religionslehre</div>
<div class="t" style="left:492px;top:471px;height:17px;line-height:17px;width:232px;letter-spacing:0.334px;">Pflichtunt</div>
<div class="t r" style="left:991px;top:471px;height:17px;line-height:17px;width:42px;">1</div>
<div class="t r" style="left:1036px;top:471px;height:17px;line-height:17px;width:42px;">0</div>
<div class="t r" style="left:1081px;top:471px;height:17px;line-height:17px;width:42px;">1</div>
<div class="t r" style="left:1126px;top:471px;height:17px;line-height:17px;width:42px;">1</div>
<div class="t" style="left:1171px;top:471px;height:17px;line-height:17px;width:253px;letter-spacing:-0.025px;">Katholische Religionslehre</div>
<div class="t" style="left:1429px;top:471px;height:17px;line-height:17px;width:67px;letter-spacing:-0.35px;">1,0</div>
<div class="t" style="left:1501px;top:471px;height:17px;line-height:17px;width:67px;letter-spacing:-0.35px;">1-6</div>
<div class="t" style="left:1572px;top:471px;height:17px;line-height:17px;width:53px;letter-spacing:0.212px;">Wort</div>
<div style="left:13px;top:489px;width:39px;height:17px;background:#e8e8f2;"></div>
<div style="left:53px;top:489px;width:192px;height:17px;background:#e8e8f2;"></div>
<div style="left:246px;top:489px;width:245px;height:17px;background:#e8e8f2;"></div>
<div style="left:492px;top:489px;width:234px;height:17px;background:#ffffff;"></div>
<div style="left:727px;top:489px;width:131px;height:17px;background:#ffffff;"></div>
<div style="left:859px;top:489px;width:131px;height:17px;background:#ffffff;"></div>
<div style="left:991px;top:489px;width:44px;height:17px;background:#ffffff;"></div>
<div style="left:1036px;top:489px;width:44px;height:17px;background:#ffffff;"></div>
<div style="left:1081px;top:489px;width:44px;height:17px;background:#ffffff;"></div>
<div style="left:1126px;top:489px;width:44px;height:17px;background:#ffffff;"></div>
<div style="left:1171px;top:489px;width:255px;height:17px;background:#ffffff;"></div>
<div style="left:1427px;top:489px;width:71px;height:17px;background:#ffffff;"></div>
<div style="left:1499px;top:489px;width:71px;height:17px;background:#ffffff;"></div>
<div style="left:1571px;top:489px;width:56px;height:17px;background:#ffffff;"></div>
<div class="gl" style="left:13px;top:506px;width:1635px;height:1px;"></div>
<div class="del" style="left:1628px;top:489px;width:19px;height:17px;"></div>
<svg style="left:1628px;top:489px" width="19" height="17"><use href="#xr" width="19" height="17"/></svg>
<div class="t r" style="left:13px;top:489px;height:17px;line-height:17px;width:38.5px;">3</div>
<div class="t" style="left:53px;top:489px;height:17px;line-height:17px;width:190px;letter-spacing:-0.35px;">Fach</div>
<div class="t" style="left:246px;top:489px;height:17px;line-height:17px;width:243px;letter-spacing:-0.091px;">Evang.Religionslehre</div>
<div class="t" style="left:492px;top:489px;height:17px;line-height:17px;width:232px;letter-spacing:0.334px;">Pflichtunt</div>
<div class="t r" style="left:991px;top:489px;height:17px;line-height:17px;width:42px;">1</div>
<div class="t r" style="left:1036px;top:489px;height:17px;line-height:17px;width:42px;">0</div>
<div class="t r" style="left:1081px;top:489px;height:17px;line-height:17px;width:42px;">1</div>
<div class="t r" style="left:1126px;top:489px;height:17px;line-height:17px;width:42px;">1</div>
<div class="t" style="left:1171px;top:489px;height:17px;line-height:17px;width:253px;letter-spacing:-0.068px;">Evangelische Religionslehre</div>
<div class="t" style="left:1429px;top:489px;height:17px;line-height:17px;width:67px;letter-spacing:-0.35px;">1,0</div>
<div class="t" style="left:1501px;top:489px;height:17px;line-height:17px;width:67px;letter-spacing:-0.35px;">1-6</div>
<div class="t" style="left:1572px;top:489px;height:17px;line-height:17px;width:53px;letter-spacing:0.212px;">Wort</div>
<div style="left:13px;top:507px;width:39px;height:17px;background:#ccd9f5;"></div>
<div style="left:53px;top:507px;width:192px;height:17px;background:#ccd9f5;"></div>
<div style="left:246px;top:507px;width:245px;height:17px;background:#ccd9f5;"></div>
<div style="left:492px;top:507px;width:234px;height:17px;background:#ebf1fe;"></div>
<div style="left:727px;top:507px;width:131px;height:17px;background:#ebf1fe;"></div>
<div style="left:859px;top:507px;width:131px;height:17px;background:#ebf1fe;"></div>
<div style="left:991px;top:507px;width:44px;height:17px;background:#ebf1fe;"></div>
<div style="left:1036px;top:507px;width:44px;height:17px;background:#ebf1fe;"></div>
<div style="left:1081px;top:507px;width:44px;height:17px;background:#ebf1fe;"></div>
<div style="left:1126px;top:507px;width:44px;height:17px;background:#ebf1fe;"></div>
<div style="left:1171px;top:507px;width:255px;height:17px;background:#ebf1fe;"></div>
<div style="left:1427px;top:507px;width:71px;height:17px;background:#ebf1fe;"></div>
<div style="left:1499px;top:507px;width:71px;height:17px;background:#ebf1fe;"></div>
<div style="left:1571px;top:507px;width:56px;height:17px;background:#ebf1fe;"></div>
<div class="gl" style="left:13px;top:524px;width:1635px;height:1px;"></div>
<div class="del" style="left:1628px;top:507px;width:19px;height:17px;"></div>
<svg style="left:1628px;top:507px" width="19" height="17"><use href="#xr" width="19" height="17"/></svg>
<div class="t r" style="left:13px;top:507px;height:17px;line-height:17px;width:38.5px;">4</div>
<div class="t" style="left:53px;top:507px;height:17px;line-height:17px;width:190px;letter-spacing:-0.35px;">Fach</div>
<div class="t" style="left:246px;top:507px;height:17px;line-height:17px;width:243px;letter-spacing:-0.03px;">Religion ohne Zuord.</div>
<div class="t" style="left:492px;top:507px;height:17px;line-height:17px;width:232px;letter-spacing:0.334px;">Pflichtunt</div>
<div class="t r" style="left:991px;top:507px;height:17px;line-height:17px;width:42px;">1</div>
<div class="t r" style="left:1036px;top:507px;height:17px;line-height:17px;width:42px;">0</div>
<div class="t r" style="left:1081px;top:507px;height:17px;line-height:17px;width:42px;">1</div>
<div class="t r" style="left:1126px;top:507px;height:17px;line-height:17px;width:42px;">1</div>
<div class="t" style="left:1171px;top:507px;height:17px;line-height:17px;width:253px;letter-spacing:-0.027px;">Religionslehre ohne konfessionelle Zuordnung</div>
<div class="t" style="left:1429px;top:507px;height:17px;line-height:17px;width:67px;letter-spacing:-0.35px;">1,0</div>
<div class="t" style="left:1501px;top:507px;height:17px;line-height:17px;width:67px;letter-spacing:-0.35px;">1-6</div>
<div class="t" style="left:1572px;top:507px;height:17px;line-height:17px;width:53px;letter-spacing:0.212px;">Wort</div>
<div style="left:13px;top:525px;width:39px;height:17px;background:#e8e8f2;"></div>
<div style="left:53px;top:525px;width:192px;height:17px;background:#e8e8f2;"></div>
<div style="left:246px;top:525px;width:245px;height:17px;background:#e8e8f2;"></div>
<div style="left:492px;top:525px;width:234px;height:17px;background:#ffffff;"></div>
<div style="left:727px;top:525px;width:131px;height:17px;background:#ffffff;"></div>
<div style="left:859px;top:525px;width:131px;height:17px;background:#ffffff;"></div>
<div style="left:991px;top:525px;width:44px;height:17px;background:#ffffff;"></div>
<div style="left:1036px;top:525px;width:44px;height:17px;background:#ffffff;"></div>
<div style="left:1081px;top:525px;width:44px;height:17px;background:#ffffff;"></div>
<div style="left:1126px;top:525px;width:44px;height:17px;background:#ffffff;"></div>
<div style="left:1171px;top:525px;width:255px;height:17px;background:#ffffff;"></div>
<div style="left:1427px;top:525px;width:71px;height:17px;background:#ffffff;"></div>
<div style="left:1499px;top:525px;width:71px;height:17px;background:#ffffff;"></div>
<div style="left:1571px;top:525px;width:56px;height:17px;background:#ffffff;"></div>
<div class="gl" style="left:13px;top:542px;width:1635px;height:1px;"></div>
<div class="del" style="left:1628px;top:525px;width:19px;height:17px;"></div>
<svg style="left:1628px;top:525px" width="19" height="17"><use href="#xr" width="19" height="17"/></svg>
<div class="t r" style="left:13px;top:525px;height:17px;line-height:17px;width:38.5px;">5</div>
<div class="t" style="left:53px;top:525px;height:17px;line-height:17px;width:190px;letter-spacing:-0.35px;">Fach</div>
<div class="t" style="left:246px;top:525px;height:17px;line-height:17px;width:243px;letter-spacing:-0.173px;">Deutsch</div>
<div class="t" style="left:492px;top:525px;height:17px;line-height:17px;width:232px;letter-spacing:0.334px;">Pflichtunt</div>
<div class="t r" style="left:991px;top:525px;height:17px;line-height:17px;width:42px;">1</div>
<div class="t r" style="left:1036px;top:525px;height:17px;line-height:17px;width:42px;">1</div>
<div class="t r" style="left:1081px;top:525px;height:17px;line-height:17px;width:42px;">1</div>
<div class="t r" style="left:1126px;top:525px;height:17px;line-height:17px;width:42px;">1</div>
<div class="t" style="left:1171px;top:525px;height:17px;line-height:17px;width:253px;letter-spacing:-0.173px;">Deutsch</div>
<div class="t" style="left:1429px;top:525px;height:17px;line-height:17px;width:67px;letter-spacing:-0.35px;">1,0</div>
<div class="t" style="left:1501px;top:525px;height:17px;line-height:17px;width:67px;letter-spacing:-0.35px;">1-6</div>
<div class="t" style="left:1572px;top:525px;height:17px;line-height:17px;width:53px;letter-spacing:0.212px;">Wort</div>
<div style="left:13px;top:543px;width:39px;height:17px;background:#ccd9f5;"></div>
<div style="left:53px;top:543px;width:192px;height:17px;background:#ccd9f5;"></div>
<div style="left:246px;top:543px;width:245px;height:17px;background:#ccd9f5;"></div>
<div style="left:492px;top:543px;width:234px;height:17px;background:#ebf1fe;"></div>
<div style="left:727px;top:543px;width:131px;height:17px;background:#ebf1fe;"></div>
<div style="left:859px;top:543px;width:131px;height:17px;background:#ebf1fe;"></div>
<div style="left:991px;top:543px;width:44px;height:17px;background:#ebf1fe;"></div>
<div style="left:1036px;top:543px;width:44px;height:17px;background:#ebf1fe;"></div>
<div style="left:1081px;top:543px;width:44px;height:17px;background:#ebf1fe;"></div>
<div style="left:1126px;top:543px;width:44px;height:17px;background:#ebf1fe;"></div>
<div style="left:1171px;top:543px;width:255px;height:17px;background:#ebf1fe;"></div>
<div style="left:1427px;top:543px;width:71px;height:17px;background:#ebf1fe;"></div>
<div style="left:1499px;top:543px;width:71px;height:17px;background:#ebf1fe;"></div>
<div style="left:1571px;top:543px;width:56px;height:17px;background:#ebf1fe;"></div>
<div class="gl" style="left:13px;top:560px;width:1635px;height:1px;"></div>
<div class="del" style="left:1628px;top:543px;width:19px;height:17px;"></div>
<svg style="left:1628px;top:543px" width="19" height="17"><use href="#xr" width="19" height="17"/></svg>
<div class="t r" style="left:13px;top:543px;height:17px;line-height:17px;width:38.5px;">6</div>
<div class="t" style="left:53px;top:543px;height:17px;line-height:17px;width:190px;letter-spacing:-0.35px;">Fach</div>
<div class="t" style="left:246px;top:543px;height:17px;line-height:17px;width:243px;letter-spacing:-0.125px;">Gemeinschaftskunde</div>
<div class="t" style="left:492px;top:543px;height:17px;line-height:17px;width:232px;letter-spacing:0.334px;">Pflichtunt</div>
<div class="t r" style="left:991px;top:543px;height:17px;line-height:17px;width:42px;">1</div>
<div class="t r" style="left:1036px;top:543px;height:17px;line-height:17px;width:42px;">1</div>
<div class="t r" style="left:1081px;top:543px;height:17px;line-height:17px;width:42px;">1</div>
<div class="t r" style="left:1126px;top:543px;height:17px;line-height:17px;width:42px;">1</div>
<div class="t" style="left:1171px;top:543px;height:17px;line-height:17px;width:253px;letter-spacing:-0.125px;">Gemeinschaftskunde</div>
<div class="t" style="left:1429px;top:543px;height:17px;line-height:17px;width:67px;letter-spacing:-0.35px;">1,0</div>
<div class="t" style="left:1501px;top:543px;height:17px;line-height:17px;width:67px;letter-spacing:-0.35px;">1-6</div>
<div class="t" style="left:1572px;top:543px;height:17px;line-height:17px;width:53px;letter-spacing:0.212px;">Wort</div>
<div style="left:13px;top:561px;width:39px;height:17px;background:#e8e8f2;"></div>
<div style="left:53px;top:561px;width:192px;height:17px;background:#e8e8f2;"></div>
<div style="left:246px;top:561px;width:245px;height:17px;background:#e8e8f2;"></div>
<div style="left:492px;top:561px;width:234px;height:17px;background:#ffffff;"></div>
<div style="left:727px;top:561px;width:131px;height:17px;background:#ffffff;"></div>
<div style="left:859px;top:561px;width:131px;height:17px;background:#ffffff;"></div>
<div style="left:991px;top:561px;width:44px;height:17px;background:#ffffff;"></div>
<div style="left:1036px;top:561px;width:44px;height:17px;background:#ffffff;"></div>
<div style="left:1081px;top:561px;width:44px;height:17px;background:#ffffff;"></div>
<div style="left:1126px;top:561px;width:44px;height:17px;background:#ffffff;"></div>
<div style="left:1171px;top:561px;width:255px;height:17px;background:#ffffff;"></div>
<div style="left:1427px;top:561px;width:71px;height:17px;background:#ffffff;"></div>
<div style="left:1499px;top:561px;width:71px;height:17px;background:#ffffff;"></div>
<div style="left:1571px;top:561px;width:56px;height:17px;background:#ffffff;"></div>
<div class="gl" style="left:13px;top:578px;width:1635px;height:1px;"></div>
<div class="del" style="left:1628px;top:561px;width:19px;height:17px;"></div>
<svg style="left:1628px;top:561px" width="19" height="17"><use href="#xr" width="19" height="17"/></svg>
<div class="t r" style="left:13px;top:561px;height:17px;line-height:17px;width:38.5px;">7</div>
<div class="t" style="left:53px;top:561px;height:17px;line-height:17px;width:190px;letter-spacing:-0.35px;">Fach</div>
<div class="t" style="left:246px;top:561px;height:17px;line-height:17px;width:243px;letter-spacing:-0.051px;">Berufsfachl.Kompetenz</div>
<div class="t" style="left:492px;top:561px;height:17px;line-height:17px;width:232px;letter-spacing:-0.153px;">Schwerpunkt</div>
<div class="t r" style="left:991px;top:561px;height:17px;line-height:17px;width:42px;">1</div>
<div class="t r" style="left:1036px;top:561px;height:17px;line-height:17px;width:42px;">1</div>
<div class="t r" style="left:1081px;top:561px;height:17px;line-height:17px;width:42px;">1</div>
<div class="t r" style="left:1126px;top:561px;height:17px;line-height:17px;width:42px;">1</div>
<div class="t" style="left:1171px;top:561px;height:17px;line-height:17px;width:253px;letter-spacing:-0.034px;">Berufsfachliche Kompetenz</div>
<div class="t" style="left:1429px;top:561px;height:17px;line-height:17px;width:67px;letter-spacing:-0.35px;">1,0</div>
<div class="t" style="left:1501px;top:561px;height:17px;line-height:17px;width:67px;letter-spacing:-0.35px;">1-6</div>
<div class="t" style="left:1572px;top:561px;height:17px;line-height:17px;width:53px;letter-spacing:0.212px;">Wort</div>
<div style="left:13px;top:579px;width:39px;height:17px;background:#ccd9f5;"></div>
<div style="left:53px;top:579px;width:192px;height:17px;background:#ccd9f5;"></div>
<div style="left:246px;top:579px;width:245px;height:17px;background:#ccd9f5;"></div>
<div style="left:492px;top:579px;width:234px;height:17px;background:#ebf1fe;"></div>
<div style="left:727px;top:579px;width:131px;height:17px;background:#ebf1fe;"></div>
<div style="left:859px;top:579px;width:131px;height:17px;background:#ebf1fe;"></div>
<div style="left:991px;top:579px;width:44px;height:17px;background:#ebf1fe;"></div>
<div style="left:1036px;top:579px;width:44px;height:17px;background:#ebf1fe;"></div>
<div style="left:1081px;top:579px;width:44px;height:17px;background:#ebf1fe;"></div>
<div style="left:1126px;top:579px;width:44px;height:17px;background:#ebf1fe;"></div>
<div style="left:1171px;top:579px;width:255px;height:17px;background:#ebf1fe;"></div>
<div style="left:1427px;top:579px;width:71px;height:17px;background:#ebf1fe;"></div>
<div style="left:1499px;top:579px;width:71px;height:17px;background:#ebf1fe;"></div>
<div style="left:1571px;top:579px;width:56px;height:17px;background:#ebf1fe;"></div>
<div class="gl" style="left:13px;top:596px;width:1635px;height:1px;"></div>
<div class="del" style="left:1628px;top:579px;width:19px;height:17px;"></div>
<svg style="left:1628px;top:579px" width="19" height="17"><use href="#xr" width="19" height="17"/></svg>
<div class="t r" style="left:13px;top:579px;height:17px;line-height:17px;width:38.5px;">8</div>
<div class="t" style="left:53px;top:579px;height:17px;line-height:17px;width:190px;letter-spacing:-0.35px;">Fach</div>
<div class="t" style="left:246px;top:579px;height:17px;line-height:17px;width:243px;letter-spacing:-0.056px;">Projektkompetenz</div>
<div class="t" style="left:492px;top:579px;height:17px;line-height:17px;width:232px;letter-spacing:-0.153px;">Schwerpunkt</div>
<div class="t r" style="left:991px;top:579px;height:17px;line-height:17px;width:42px;">1</div>
<div class="t r" style="left:1036px;top:579px;height:17px;line-height:17px;width:42px;">1</div>
<div class="t r" style="left:1081px;top:579px;height:17px;line-height:17px;width:42px;">1</div>
<div class="t r" style="left:1126px;top:579px;height:17px;line-height:17px;width:42px;">1</div>
<div class="t" style="left:1171px;top:579px;height:17px;line-height:17px;width:253px;letter-spacing:-0.056px;">Projektkompetenz</div>
<div class="t" style="left:1429px;top:579px;height:17px;line-height:17px;width:67px;letter-spacing:-0.35px;">1,0</div>
<div class="t" style="left:1501px;top:579px;height:17px;line-height:17px;width:67px;letter-spacing:-0.35px;">1-6</div>
<div class="t" style="left:1572px;top:579px;height:17px;line-height:17px;width:53px;letter-spacing:0.212px;">Wort</div>
<div style="left:13px;top:597px;width:39px;height:17px;background:#e8e8f2;"></div>
<div style="left:53px;top:597px;width:192px;height:17px;background:#e8e8f2;"></div>
<div style="left:246px;top:597px;width:245px;height:17px;background:#e8e8f2;"></div>
<div style="left:492px;top:597px;width:234px;height:17px;background:#ffffff;"></div>
<div style="left:727px;top:597px;width:131px;height:17px;background:#ffffff;"></div>
<div style="left:859px;top:597px;width:131px;height:17px;background:#ffffff;"></div>
<div style="left:991px;top:597px;width:44px;height:17px;background:#ffffff;"></div>
<div style="left:1036px;top:597px;width:44px;height:17px;background:#ffffff;"></div>
<div style="left:1081px;top:597px;width:44px;height:17px;background:#ffffff;"></div>
<div style="left:1126px;top:597px;width:44px;height:17px;background:#ffffff;"></div>
<div style="left:1171px;top:597px;width:255px;height:17px;background:#ffffff;"></div>
<div style="left:1427px;top:597px;width:71px;height:17px;background:#ffffff;"></div>
<div style="left:1499px;top:597px;width:71px;height:17px;background:#ffffff;"></div>
<div style="left:1571px;top:597px;width:56px;height:17px;background:#ffffff;"></div>
<div class="gl" style="left:13px;top:614px;width:1635px;height:1px;"></div>
<div class="del" style="left:1628px;top:597px;width:19px;height:17px;"></div>
<svg style="left:1628px;top:597px" width="19" height="17"><use href="#xr" width="19" height="17"/></svg>
<div class="t r" style="left:13px;top:597px;height:17px;line-height:17px;width:38.5px;">9</div>
<div class="t" style="left:53px;top:597px;height:17px;line-height:17px;width:190px;letter-spacing:-0.35px;">Fach</div>
<div class="t" style="left:246px;top:597px;height:17px;line-height:17px;width:243px;letter-spacing:0.042px;">Wirtschaftskompetenz</div>
<div class="t" style="left:492px;top:597px;height:17px;line-height:17px;width:232px;letter-spacing:-0.153px;">Schwerpunkt</div>
<div class="t r" style="left:991px;top:597px;height:17px;line-height:17px;width:42px;">1</div>
<div class="t r" style="left:1036px;top:597px;height:17px;line-height:17px;width:42px;">1</div>
<div class="t r" style="left:1081px;top:597px;height:17px;line-height:17px;width:42px;">1</div>
<div class="t r" style="left:1126px;top:597px;height:17px;line-height:17px;width:42px;">1</div>
<div class="t" style="left:1171px;top:597px;height:17px;line-height:17px;width:253px;letter-spacing:0.042px;">Wirtschaftskompetenz</div>
<div class="t" style="left:1429px;top:597px;height:17px;line-height:17px;width:67px;letter-spacing:-0.35px;">1,0</div>
<div class="t" style="left:1501px;top:597px;height:17px;line-height:17px;width:67px;letter-spacing:-0.35px;">1-6</div>
<div class="t" style="left:1572px;top:597px;height:17px;line-height:17px;width:53px;letter-spacing:0.212px;">Wort</div>
<div style="left:13px;top:615px;width:39px;height:17px;background:#ccd9f5;"></div>
<div style="left:53px;top:615px;width:192px;height:17px;background:#ccd9f5;"></div>
<div style="left:246px;top:615px;width:245px;height:17px;background:#ccd9f5;"></div>
<div style="left:492px;top:615px;width:234px;height:17px;background:#ebf1fe;"></div>
<div style="left:727px;top:615px;width:131px;height:17px;background:#ebf1fe;"></div>
<div style="left:859px;top:615px;width:131px;height:17px;background:#ebf1fe;"></div>
<div style="left:991px;top:615px;width:44px;height:17px;background:#ebf1fe;"></div>
<div style="left:1036px;top:615px;width:44px;height:17px;background:#ebf1fe;"></div>
<div style="left:1081px;top:615px;width:44px;height:17px;background:#ebf1fe;"></div>
<div style="left:1126px;top:615px;width:44px;height:17px;background:#ebf1fe;"></div>
<div style="left:1171px;top:615px;width:255px;height:17px;background:#ebf1fe;"></div>
<div style="left:1427px;top:615px;width:71px;height:17px;background:#ebf1fe;"></div>
<div style="left:1499px;top:615px;width:71px;height:17px;background:#ebf1fe;"></div>
<div style="left:1571px;top:615px;width:56px;height:17px;background:#ebf1fe;"></div>
<div class="gl" style="left:13px;top:632px;width:1635px;height:1px;"></div>
<div class="del" style="left:1628px;top:615px;width:19px;height:17px;"></div>
<svg style="left:1628px;top:615px" width="19" height="17"><use href="#xr" width="19" height="17"/></svg>
<div class="t r" style="left:13px;top:615px;height:17px;line-height:17px;width:38.5px;">10</div>
<div class="t" style="left:53px;top:615px;height:17px;line-height:17px;width:190px;letter-spacing:-0.35px;">Fach</div>
<div class="t" style="left:246px;top:615px;height:17px;line-height:17px;width:243px;letter-spacing:-0.131px;">PR Zubereiten von einfachen Speisen und Geric...</div>
<div class="t" style="left:492px;top:615px;height:17px;line-height:17px;width:232px;letter-spacing:-0.096px;">Prüfungsber</div>
<div class="t r" style="left:991px;top:615px;height:17px;line-height:17px;width:42px;">1</div>
<div class="t r" style="left:1036px;top:615px;height:17px;line-height:17px;width:42px;">1</div>
<div class="t r" style="left:1081px;top:615px;height:17px;line-height:17px;width:42px;">1</div>
<div class="t r" style="left:1126px;top:615px;height:17px;line-height:17px;width:42px;">1</div>
<div class="t" style="left:1171px;top:615px;height:17px;line-height:17px;width:253px;letter-spacing:-0.071px;">Zubereiten von einfachenSpeisen und Gerichten</div>
<div class="t" style="left:1429px;top:615px;height:17px;line-height:17px;width:67px;letter-spacing:-0.35px;">1,0</div>
<div class="t" style="left:1501px;top:615px;height:17px;line-height:17px;width:67px;letter-spacing:-0.35px;">1,0</div>
<div class="t" style="left:1572px;top:615px;height:17px;line-height:17px;width:53px;letter-spacing:-0.35px;">Zahl</div>
<div style="left:13px;top:633px;width:39px;height:17px;background:#e8e8f2;"></div>
<div style="left:53px;top:633px;width:192px;height:17px;background:#e8e8f2;"></div>
<div style="left:246px;top:633px;width:245px;height:17px;background:#e8e8f2;"></div>
<div style="left:492px;top:633px;width:234px;height:17px;background:#ffffff;"></div>
<div style="left:727px;top:633px;width:131px;height:17px;background:#ffffff;"></div>
<div style="left:859px;top:633px;width:131px;height:17px;background:#ffffff;"></div>
<div style="left:991px;top:633px;width:44px;height:17px;background:#ffffff;"></div>
<div style="left:1036px;top:633px;width:44px;height:17px;background:#ffffff;"></div>
<div style="left:1081px;top:633px;width:44px;height:17px;background:#ffffff;"></div>
<div style="left:1126px;top:633px;width:44px;height:17px;background:#ffffff;"></div>
<div style="left:1171px;top:633px;width:255px;height:17px;background:#ffffff;"></div>
<div style="left:1427px;top:633px;width:71px;height:17px;background:#ffffff;"></div>
<div style="left:1499px;top:633px;width:71px;height:17px;background:#ffffff;"></div>
<div style="left:1571px;top:633px;width:56px;height:17px;background:#ffffff;"></div>
<div class="gl" style="left:13px;top:650px;width:1635px;height:1px;"></div>
<div class="del" style="left:1628px;top:633px;width:19px;height:17px;"></div>
<svg style="left:1628px;top:633px" width="19" height="17"><use href="#xr" width="19" height="17"/></svg>
<div class="t r" style="left:13px;top:633px;height:17px;line-height:17px;width:38.5px;">11</div>
<div class="t" style="left:53px;top:633px;height:17px;line-height:17px;width:190px;letter-spacing:-0.35px;">Fach</div>
<div class="t" style="left:246px;top:633px;height:17px;line-height:17px;width:243px;letter-spacing:-0.154px;">PR Planen, Zubereiten, Präsentieren 3Gang-Menü</div>
<div class="t" style="left:492px;top:633px;height:17px;line-height:17px;width:232px;letter-spacing:-0.096px;">Prüfungsber</div>
<div class="t r" style="left:991px;top:633px;height:17px;line-height:17px;width:42px;">1</div>
<div class="t r" style="left:1036px;top:633px;height:17px;line-height:17px;width:42px;">1</div>
<div class="t r" style="left:1081px;top:633px;height:17px;line-height:17px;width:42px;">1</div>
<div class="t r" style="left:1126px;top:633px;height:17px;line-height:17px;width:42px;">1</div>
<div class="t" style="left:1171px;top:633px;height:17px;line-height:17px;width:253px;letter-spacing:-0.078px;">Planen, Zubereiten und Präsentieren eines Drei-G...</div>
<div class="t" style="left:1429px;top:633px;height:17px;line-height:17px;width:67px;letter-spacing:-0.35px;">1,0</div>
<div class="t" style="left:1501px;top:633px;height:17px;line-height:17px;width:67px;letter-spacing:-0.35px;">1,0</div>
<div class="t" style="left:1572px;top:633px;height:17px;line-height:17px;width:53px;letter-spacing:-0.35px;">Zahl</div>
<div style="left:13px;top:651px;width:39px;height:17px;background:#ccd9f5;"></div>
<div style="left:53px;top:651px;width:192px;height:17px;background:#ccd9f5;"></div>
<div style="left:246px;top:651px;width:245px;height:17px;background:#ccd9f5;"></div>
<div style="left:492px;top:651px;width:234px;height:17px;background:#ebf1fe;"></div>
<div style="left:727px;top:651px;width:131px;height:17px;background:#ebf1fe;"></div>
<div style="left:859px;top:651px;width:131px;height:17px;background:#ebf1fe;"></div>
<div style="left:991px;top:651px;width:44px;height:17px;background:#ebf1fe;"></div>
<div style="left:1036px;top:651px;width:44px;height:17px;background:#ebf1fe;"></div>
<div style="left:1081px;top:651px;width:44px;height:17px;background:#ebf1fe;"></div>
<div style="left:1126px;top:651px;width:44px;height:17px;background:#ebf1fe;"></div>
<div style="left:1171px;top:651px;width:255px;height:17px;background:#ebf1fe;"></div>
<div style="left:1427px;top:651px;width:71px;height:17px;background:#ebf1fe;"></div>
<div style="left:1499px;top:651px;width:71px;height:17px;background:#ebf1fe;"></div>
<div style="left:1571px;top:651px;width:56px;height:17px;background:#ebf1fe;"></div>
<div class="gl" style="left:13px;top:668px;width:1635px;height:1px;"></div>
<div class="del" style="left:1628px;top:651px;width:19px;height:17px;"></div>
<svg style="left:1628px;top:651px" width="19" height="17"><use href="#xr" width="19" height="17"/></svg>
<div class="t r" style="left:13px;top:651px;height:17px;line-height:17px;width:38.5px;">12</div>
<div class="t" style="left:53px;top:651px;height:17px;line-height:17px;width:190px;letter-spacing:-0.35px;">Fach</div>
<div class="t" style="left:246px;top:651px;height:17px;line-height:17px;width:243px;letter-spacing:-0.035px;">PR Produkte, Lagerhaltung und Warenwirtschaft</div>
<div class="t" style="left:492px;top:651px;height:17px;line-height:17px;width:232px;letter-spacing:-0.096px;">Prüfungsber</div>
<div class="t r" style="left:991px;top:651px;height:17px;line-height:17px;width:42px;">1</div>
<div class="t r" style="left:1036px;top:651px;height:17px;line-height:17px;width:42px;">1</div>
<div class="t r" style="left:1081px;top:651px;height:17px;line-height:17px;width:42px;">1</div>
<div class="t r" style="left:1126px;top:651px;height:17px;line-height:17px;width:42px;">1</div>
<div class="t" style="left:1171px;top:651px;height:17px;line-height:17px;width:253px;letter-spacing:0.021px;">Produkte, Lagerhaltungund Warenwirtschaft</div>
<div class="t" style="left:1429px;top:651px;height:17px;line-height:17px;width:67px;letter-spacing:-0.35px;">1,0</div>
<div class="t" style="left:1501px;top:651px;height:17px;line-height:17px;width:67px;letter-spacing:-0.35px;">1,0</div>
<div class="t" style="left:1572px;top:651px;height:17px;line-height:17px;width:53px;letter-spacing:-0.35px;">Zahl</div>
<div style="left:13px;top:669px;width:39px;height:17px;background:#e8e8f2;"></div>
<div style="left:53px;top:669px;width:192px;height:17px;background:#e8e8f2;"></div>
<div style="left:246px;top:669px;width:245px;height:17px;background:#e8e8f2;"></div>
<div style="left:492px;top:669px;width:234px;height:17px;background:#ffffff;"></div>
<div style="left:727px;top:669px;width:131px;height:17px;background:#ffffff;"></div>
<div style="left:859px;top:669px;width:131px;height:17px;background:#ffffff;"></div>
<div style="left:991px;top:669px;width:44px;height:17px;background:#ffffff;"></div>
<div style="left:1036px;top:669px;width:44px;height:17px;background:#ffffff;"></div>
<div style="left:1081px;top:669px;width:44px;height:17px;background:#ffffff;"></div>
<div style="left:1126px;top:669px;width:44px;height:17px;background:#ffffff;"></div>
<div style="left:1171px;top:669px;width:255px;height:17px;background:#ffffff;"></div>
<div style="left:1427px;top:669px;width:71px;height:17px;background:#ffffff;"></div>
<div style="left:1499px;top:669px;width:71px;height:17px;background:#ffffff;"></div>
<div style="left:1571px;top:669px;width:56px;height:17px;background:#ffffff;"></div>
<div class="gl" style="left:13px;top:686px;width:1635px;height:1px;"></div>
<div class="del" style="left:1628px;top:669px;width:19px;height:17px;"></div>
<svg style="left:1628px;top:669px" width="19" height="17"><use href="#xr" width="19" height="17"/></svg>
<div class="t r" style="left:13px;top:669px;height:17px;line-height:17px;width:38.5px;">13</div>
<div class="t" style="left:53px;top:669px;height:17px;line-height:17px;width:190px;letter-spacing:-0.35px;">Fach</div>
<div class="t" style="left:246px;top:669px;height:17px;line-height:17px;width:243px;">PR Technologie, Gästeinformatuion, Arbeiten i ...</div>
<div class="t" style="left:492px;top:669px;height:17px;line-height:17px;width:232px;letter-spacing:-0.096px;">Prüfungsber</div>
<div class="t r" style="left:991px;top:669px;height:17px;line-height:17px;width:42px;">1</div>
<div class="t r" style="left:1036px;top:669px;height:17px;line-height:17px;width:42px;">1</div>
<div class="t r" style="left:1081px;top:669px;height:17px;line-height:17px;width:42px;">1</div>
<div class="t r" style="left:1126px;top:669px;height:17px;line-height:17px;width:42px;">1</div>
<div class="t" style="left:1171px;top:669px;height:17px;line-height:17px;width:253px;letter-spacing:0.053px;">Technologie, Gästeinformationund Arbeiten im Te...</div>
<div class="t" style="left:1429px;top:669px;height:17px;line-height:17px;width:67px;letter-spacing:-0.35px;">1,0</div>
<div class="t" style="left:1501px;top:669px;height:17px;line-height:17px;width:67px;letter-spacing:-0.35px;">1,0</div>
<div class="t" style="left:1572px;top:669px;height:17px;line-height:17px;width:53px;letter-spacing:-0.35px;">Zahl</div>
<div style="left:13px;top:687px;width:39px;height:17px;background:#ccd9f5;"></div>
<div style="left:53px;top:687px;width:192px;height:17px;background:#ccd9f5;"></div>
<div style="left:246px;top:687px;width:245px;height:17px;background:#ccd9f5;"></div>
<div style="left:492px;top:687px;width:234px;height:17px;background:#ebf1fe;"></div>
<div style="left:727px;top:687px;width:131px;height:17px;background:#ebf1fe;"></div>
<div style="left:859px;top:687px;width:131px;height:17px;background:#ebf1fe;"></div>
<div style="left:991px;top:687px;width:44px;height:17px;background:#ebf1fe;"></div>
<div style="left:1036px;top:687px;width:44px;height:17px;background:#ebf1fe;"></div>
<div style="left:1081px;top:687px;width:44px;height:17px;background:#ebf1fe;"></div>
<div style="left:1126px;top:687px;width:44px;height:17px;background:#ebf1fe;"></div>
<div style="left:1171px;top:687px;width:255px;height:17px;background:#ebf1fe;"></div>
<div style="left:1427px;top:687px;width:71px;height:17px;background:#ebf1fe;"></div>
<div style="left:1499px;top:687px;width:71px;height:17px;background:#ebf1fe;"></div>
<div style="left:1571px;top:687px;width:56px;height:17px;background:#ebf1fe;"></div>
<div class="gl" style="left:13px;top:704px;width:1635px;height:1px;"></div>
<div class="del" style="left:1628px;top:687px;width:19px;height:17px;"></div>
<svg style="left:1628px;top:687px" width="19" height="17"><use href="#xr" width="19" height="17"/></svg>
<div class="t r" style="left:13px;top:687px;height:17px;line-height:17px;width:38.5px;">14</div>
<div class="t" style="left:53px;top:687px;height:17px;line-height:17px;width:190px;letter-spacing:-0.35px;">Fach</div>
<div class="t" style="left:246px;top:687px;height:17px;line-height:17px;width:243px;letter-spacing:-0.085px;">PR Wirtschaft- und Sozialkunde</div>
<div class="t" style="left:492px;top:687px;height:17px;line-height:17px;width:232px;letter-spacing:-0.096px;">Prüfungsber</div>
<div class="t r" style="left:991px;top:687px;height:17px;line-height:17px;width:42px;">1</div>
<div class="t r" style="left:1036px;top:687px;height:17px;line-height:17px;width:42px;">1</div>
<div class="t r" style="left:1081px;top:687px;height:17px;line-height:17px;width:42px;">1</div>
<div class="t r" style="left:1126px;top:687px;height:17px;line-height:17px;width:42px;">1</div>
<div class="t" style="left:1171px;top:687px;height:17px;line-height:17px;width:253px;">Wirtschaft- und Sozialkunde</div>
<div class="t" style="left:1429px;top:687px;height:17px;line-height:17px;width:67px;letter-spacing:-0.35px;">1,0</div>
<div class="t" style="left:1501px;top:687px;height:17px;line-height:17px;width:67px;letter-spacing:-0.35px;">1,0</div>
<div class="t" style="left:1572px;top:687px;height:17px;line-height:17px;width:53px;letter-spacing:-0.35px;">Zahl</div>
<div style="left:13px;top:705px;width:39px;height:17px;background:#e8e8f2;"></div>
<div style="left:53px;top:705px;width:192px;height:17px;background:#ffffff;"></div>
<div style="left:246px;top:705px;width:245px;height:17px;background:#ffffff;"></div>
<div style="left:492px;top:705px;width:234px;height:17px;background:#e8e8f2;"></div>
<div style="left:727px;top:705px;width:131px;height:17px;background:#ffffff;"></div>
<div style="left:859px;top:705px;width:131px;height:17px;background:#ffffff;"></div>
<div style="left:991px;top:705px;width:44px;height:17px;background:#e8e8f2;"></div>
<div style="left:1036px;top:705px;width:44px;height:17px;background:#e8e8f2;"></div>
<div style="left:1081px;top:705px;width:44px;height:17px;background:#e8e8f2;"></div>
<div style="left:1126px;top:705px;width:44px;height:17px;background:#e8e8f2;"></div>
<div style="left:1171px;top:705px;width:255px;height:17px;background:#ffffff;"></div>
<div style="left:1427px;top:705px;width:71px;height:17px;background:#e8e8f2;"></div>
<div style="left:1499px;top:705px;width:71px;height:17px;background:#e8e8f2;"></div>
<div style="left:1571px;top:705px;width:56px;height:17px;background:#e8e8f2;"></div>
<div class="gl" style="left:13px;top:722px;width:1635px;height:1px;"></div>
<div class="del" style="left:1628px;top:705px;width:19px;height:17px;"></div>
<svg style="left:1628px;top:705px" width="19" height="17"><use href="#xr" width="19" height="17"/></svg>
<div class="t r" style="left:13px;top:705px;height:17px;line-height:17px;width:38.5px;">15</div>
<div class="t" style="left:53px;top:705px;height:17px;line-height:17px;width:190px;letter-spacing:-0.277px;">Bemerkungen</div>
<div class="t" style="left:246px;top:705px;height:17px;line-height:17px;width:243px;letter-spacing:-0.277px;">Bemerkungen</div>
<div class="t" style="left:1171px;top:705px;height:17px;line-height:17px;width:253px;letter-spacing:-0.277px;">Bemerkungen</div>
<div style="left:13px;top:723px;width:39px;height:17px;background:#ccd9f5;"></div>
<div style="left:53px;top:723px;width:192px;height:17px;background:#ebf1fe;"></div>
<div style="left:246px;top:723px;width:245px;height:17px;background:#ebf1fe;"></div>
<div style="left:492px;top:723px;width:234px;height:17px;background:#ccd9f5;"></div>
<div style="left:727px;top:723px;width:131px;height:17px;background:#ebf1fe;"></div>
<div style="left:859px;top:723px;width:131px;height:17px;background:#ebf1fe;"></div>
<div style="left:991px;top:723px;width:44px;height:17px;background:#ccd9f5;"></div>
<div style="left:1036px;top:723px;width:44px;height:17px;background:#ccd9f5;"></div>
<div style="left:1081px;top:723px;width:44px;height:17px;background:#ccd9f5;"></div>
<div style="left:1126px;top:723px;width:44px;height:17px;background:#ccd9f5;"></div>
<div style="left:1171px;top:723px;width:255px;height:17px;background:#ebf1fe;"></div>
<div style="left:1427px;top:723px;width:71px;height:17px;background:#ccd9f5;"></div>
<div style="left:1499px;top:723px;width:71px;height:17px;background:#ccd9f5;"></div>
<div style="left:1571px;top:723px;width:56px;height:17px;background:#ccd9f5;"></div>
<div class="gl" style="left:13px;top:740px;width:1635px;height:1px;"></div>
<div class="del" style="left:1628px;top:723px;width:19px;height:17px;"></div>
<svg style="left:1628px;top:723px" width="19" height="17"><use href="#xr" width="19" height="17"/></svg>
<div class="t r" style="left:13px;top:723px;height:17px;line-height:17px;width:38.5px;">16</div>
<div class="t" style="left:53px;top:723px;height:17px;line-height:17px;width:190px;letter-spacing:0.066px;">teilgenommen</div>
<div class="t" style="left:246px;top:723px;height:17px;line-height:17px;width:243px;letter-spacing:0.066px;">teilgenommen</div>
<div class="t" style="left:1171px;top:723px;height:17px;line-height:17px;width:253px;letter-spacing:0.066px;">teilgenommen</div>
<div style="left:13px;top:741px;width:39px;height:17px;background:#e8e8f2;"></div>
<div style="left:53px;top:741px;width:192px;height:17px;background:#ffffff;"></div>
<div style="left:246px;top:741px;width:245px;height:17px;background:#ffffff;"></div>
<div style="left:492px;top:741px;width:234px;height:17px;background:#e8e8f2;"></div>
<div style="left:727px;top:741px;width:131px;height:17px;background:#ffffff;"></div>
<div style="left:859px;top:741px;width:131px;height:17px;background:#ffffff;"></div>
<div style="left:991px;top:741px;width:44px;height:17px;background:#e8e8f2;"></div>
<div style="left:1036px;top:741px;width:44px;height:17px;background:#e8e8f2;"></div>
<div style="left:1081px;top:741px;width:44px;height:17px;background:#e8e8f2;"></div>
<div style="left:1126px;top:741px;width:44px;height:17px;background:#e8e8f2;"></div>
<div style="left:1171px;top:741px;width:255px;height:17px;background:#ffffff;"></div>
<div style="left:1427px;top:741px;width:71px;height:17px;background:#e8e8f2;"></div>
<div style="left:1499px;top:741px;width:71px;height:17px;background:#e8e8f2;"></div>
<div style="left:1571px;top:741px;width:56px;height:17px;background:#e8e8f2;"></div>
<div class="gl" style="left:13px;top:758px;width:1635px;height:1px;"></div>
<div class="del" style="left:1628px;top:741px;width:19px;height:17px;"></div>
<svg style="left:1628px;top:741px" width="19" height="17"><use href="#xr" width="19" height="17"/></svg>
<div class="t r" style="left:13px;top:741px;height:17px;line-height:17px;width:38.5px;">17</div>
<div class="t" style="left:53px;top:741px;height:17px;line-height:17px;width:190px;letter-spacing:0.091px;">wiederholt</div>
<div class="t" style="left:246px;top:741px;height:17px;line-height:17px;width:243px;letter-spacing:0.091px;">wiederholt</div>
<div class="t" style="left:1171px;top:741px;height:17px;line-height:17px;width:253px;letter-spacing:0.091px;">wiederholt</div>
<div style="left:13px;top:759px;width:39px;height:17px;background:#ccd9f5;"></div>
<div style="left:53px;top:759px;width:192px;height:17px;background:#ebf1fe;"></div>
<div style="left:246px;top:759px;width:245px;height:17px;background:#ebf1fe;"></div>
<div style="left:492px;top:759px;width:234px;height:17px;background:#ccd9f5;"></div>
<div style="left:727px;top:759px;width:131px;height:17px;background:#ebf1fe;"></div>
<div style="left:859px;top:759px;width:131px;height:17px;background:#ebf1fe;"></div>
<div style="left:991px;top:759px;width:44px;height:17px;background:#ccd9f5;"></div>
<div style="left:1036px;top:759px;width:44px;height:17px;background:#ccd9f5;"></div>
<div style="left:1081px;top:759px;width:44px;height:17px;background:#ccd9f5;"></div>
<div style="left:1126px;top:759px;width:44px;height:17px;background:#ccd9f5;"></div>
<div style="left:1171px;top:759px;width:255px;height:17px;background:#ebf1fe;"></div>
<div style="left:1427px;top:759px;width:71px;height:17px;background:#ccd9f5;"></div>
<div style="left:1499px;top:759px;width:71px;height:17px;background:#ccd9f5;"></div>
<div style="left:1571px;top:759px;width:56px;height:17px;background:#ccd9f5;"></div>
<div class="gl" style="left:13px;top:776px;width:1635px;height:1px;"></div>
<div class="del" style="left:1628px;top:759px;width:19px;height:17px;"></div>
<svg style="left:1628px;top:759px" width="19" height="17"><use href="#xr" width="19" height="17"/></svg>
<div class="t r" style="left:13px;top:759px;height:17px;line-height:17px;width:38.5px;">18</div>
<div class="t" style="left:53px;top:759px;height:17px;line-height:17px;width:190px;letter-spacing:-0.083px;">bestanden</div>
<div class="t" style="left:246px;top:759px;height:17px;line-height:17px;width:243px;letter-spacing:-0.083px;">bestanden</div>
<div class="t" style="left:1171px;top:759px;height:17px;line-height:17px;width:253px;letter-spacing:-0.083px;">bestanden</div>
<div style="left:13px;top:777px;width:39px;height:17px;background:#e8e8f2;"></div>
<div style="left:53px;top:777px;width:192px;height:17px;background:#ffffff;"></div>
<div style="left:246px;top:777px;width:245px;height:17px;background:#ffffff;"></div>
<div style="left:492px;top:777px;width:234px;height:17px;background:#e8e8f2;"></div>
<div style="left:727px;top:777px;width:131px;height:17px;background:#ffffff;"></div>
<div style="left:859px;top:777px;width:131px;height:17px;background:#ffffff;"></div>
<div style="left:991px;top:777px;width:44px;height:17px;background:#e8e8f2;"></div>
<div style="left:1036px;top:777px;width:44px;height:17px;background:#e8e8f2;"></div>
<div style="left:1081px;top:777px;width:44px;height:17px;background:#e8e8f2;"></div>
<div style="left:1126px;top:777px;width:44px;height:17px;background:#e8e8f2;"></div>
<div style="left:1171px;top:777px;width:255px;height:17px;background:#ffffff;"></div>
<div style="left:1427px;top:777px;width:71px;height:17px;background:#e8e8f2;"></div>
<div style="left:1499px;top:777px;width:71px;height:17px;background:#e8e8f2;"></div>
<div style="left:1571px;top:777px;width:56px;height:17px;background:#e8e8f2;"></div>
<div class="gl" style="left:13px;top:794px;width:1635px;height:1px;"></div>
<div class="del" style="left:1628px;top:777px;width:19px;height:17px;"></div>
<svg style="left:1628px;top:777px" width="19" height="17"><use href="#xr" width="19" height="17"/></svg>
<div class="t r" style="left:13px;top:777px;height:17px;line-height:17px;width:38.5px;">19</div>
<div class="t" style="left:53px;top:777px;height:17px;line-height:17px;width:190px;letter-spacing:-0.202px;">Abgang</div>
<div class="t" style="left:246px;top:777px;height:17px;line-height:17px;width:243px;letter-spacing:-0.202px;">Abgang</div>
<div class="t" style="left:1171px;top:777px;height:17px;line-height:17px;width:253px;letter-spacing:-0.202px;">Abgang</div>
<div style="left:13px;top:795px;width:39px;height:17px;background:#ccd9f5;"></div>
<div style="left:53px;top:795px;width:192px;height:17px;background:#ebf1fe;"></div>
<div style="left:246px;top:795px;width:245px;height:17px;background:#ebf1fe;"></div>
<div style="left:492px;top:795px;width:234px;height:17px;background:#ccd9f5;"></div>
<div style="left:727px;top:795px;width:131px;height:17px;background:#ebf1fe;"></div>
<div style="left:859px;top:795px;width:131px;height:17px;background:#ebf1fe;"></div>
<div style="left:991px;top:795px;width:44px;height:17px;background:#ccd9f5;"></div>
<div style="left:1036px;top:795px;width:44px;height:17px;background:#ccd9f5;"></div>
<div style="left:1081px;top:795px;width:44px;height:17px;background:#ccd9f5;"></div>
<div style="left:1126px;top:795px;width:44px;height:17px;background:#ccd9f5;"></div>
<div style="left:1171px;top:795px;width:255px;height:17px;background:#ebf1fe;"></div>
<div style="left:1427px;top:795px;width:71px;height:17px;background:#ccd9f5;"></div>
<div style="left:1499px;top:795px;width:71px;height:17px;background:#ccd9f5;"></div>
<div style="left:1571px;top:795px;width:56px;height:17px;background:#ccd9f5;"></div>
<div class="gl" style="left:13px;top:812px;width:1635px;height:1px;"></div>
<div class="del" style="left:1628px;top:795px;width:19px;height:17px;"></div>
<svg style="left:1628px;top:795px" width="19" height="17"><use href="#xr" width="19" height="17"/></svg>
<div class="t r" style="left:13px;top:795px;height:17px;line-height:17px;width:38.5px;">20</div>
<div class="t" style="left:53px;top:795px;height:17px;line-height:17px;width:190px;letter-spacing:-0.218px;">Lob / Preis</div>
<div class="t" style="left:246px;top:795px;height:17px;line-height:17px;width:243px;letter-spacing:-0.218px;">Lob / Preis</div>
<div class="t" style="left:1171px;top:795px;height:17px;line-height:17px;width:253px;letter-spacing:-0.218px;">Lob / Preis</div>
<div style="left:13px;top:813px;width:39px;height:17px;background:#e8e8f2;"></div>
<div style="left:53px;top:813px;width:192px;height:17px;background:#ffffff;"></div>
<div style="left:246px;top:813px;width:245px;height:17px;background:#ffffff;"></div>
<div style="left:492px;top:813px;width:234px;height:17px;background:#e8e8f2;"></div>
<div style="left:727px;top:813px;width:131px;height:17px;background:#ffffff;"></div>
<div style="left:859px;top:813px;width:131px;height:17px;background:#ffffff;"></div>
<div style="left:991px;top:813px;width:44px;height:17px;background:#e8e8f2;"></div>
<div style="left:1036px;top:813px;width:44px;height:17px;background:#e8e8f2;"></div>
<div style="left:1081px;top:813px;width:44px;height:17px;background:#e8e8f2;"></div>
<div style="left:1126px;top:813px;width:44px;height:17px;background:#e8e8f2;"></div>
<div style="left:1171px;top:813px;width:255px;height:17px;background:#ffffff;"></div>
<div style="left:1427px;top:813px;width:71px;height:17px;background:#e8e8f2;"></div>
<div style="left:1499px;top:813px;width:71px;height:17px;background:#e8e8f2;"></div>
<div style="left:1571px;top:813px;width:56px;height:17px;background:#e8e8f2;"></div>
<div class="gl" style="left:13px;top:830px;width:1635px;height:1px;"></div>
<div class="del" style="left:1628px;top:813px;width:19px;height:17px;"></div>
<svg style="left:1628px;top:813px" width="19" height="17"><use href="#xr" width="19" height="17"/></svg>
<div class="t r" style="left:13px;top:813px;height:17px;line-height:17px;width:38.5px;">21</div>
<div class="t" style="left:53px;top:813px;height:17px;line-height:17px;width:190px;">Durchschnitt 1</div>
<div class="t" style="left:246px;top:813px;height:17px;line-height:17px;width:243px;letter-spacing:-0.218px;">Lob / Preis</div>
<div class="t" style="left:1171px;top:813px;height:17px;line-height:17px;width:253px;">Durchschnitt 1</div>
<div style="left:13px;top:831px;width:39px;height:17px;background:#ccd9f5;"></div>
<div style="left:53px;top:831px;width:192px;height:17px;background:#ebf1fe;"></div>
<div style="left:246px;top:831px;width:245px;height:17px;background:#ebf1fe;"></div>
<div style="left:492px;top:831px;width:234px;height:17px;background:#ccd9f5;"></div>
<div style="left:727px;top:831px;width:131px;height:17px;background:#ebf1fe;"></div>
<div style="left:859px;top:831px;width:131px;height:17px;background:#ebf1fe;"></div>
<div style="left:991px;top:831px;width:44px;height:17px;background:#ccd9f5;"></div>
<div style="left:1036px;top:831px;width:44px;height:17px;background:#ccd9f5;"></div>
<div style="left:1081px;top:831px;width:44px;height:17px;background:#ccd9f5;"></div>
<div style="left:1126px;top:831px;width:44px;height:17px;background:#ccd9f5;"></div>
<div style="left:1171px;top:831px;width:255px;height:17px;background:#ebf1fe;"></div>
<div style="left:1427px;top:831px;width:71px;height:17px;background:#ccd9f5;"></div>
<div style="left:1499px;top:831px;width:71px;height:17px;background:#ccd9f5;"></div>
<div style="left:1571px;top:831px;width:56px;height:17px;background:#ccd9f5;"></div>
<div class="gl" style="left:13px;top:848px;width:1635px;height:1px;"></div>
<div class="del" style="left:1628px;top:831px;width:19px;height:17px;"></div>
<svg style="left:1628px;top:831px" width="19" height="17"><use href="#xr" width="19" height="17"/></svg>
<div class="t r" style="left:13px;top:831px;height:17px;line-height:17px;width:38.5px;">22</div>
<div class="t" style="left:53px;top:831px;height:17px;line-height:17px;width:190px;">Durchschnitt 3</div>
<div class="t" style="left:246px;top:831px;height:17px;line-height:17px;width:243px;">Durchschnitt 3</div>
<div class="t" style="left:1171px;top:831px;height:17px;line-height:17px;width:253px;">Durchschnitt 3</div>
<div style="left:13px;top:849px;width:39px;height:17px;background:#e8e8f2;"></div>
<div style="left:53px;top:849px;width:192px;height:17px;background:#e8e8f2;"></div>
<div style="left:246px;top:849px;width:245px;height:17px;background:#e8e8f2;"></div>
<div style="left:492px;top:849px;width:234px;height:17px;background:#e8e8f2;"></div>
<div style="left:727px;top:849px;width:131px;height:17px;background:#e8e8f2;"></div>
<div style="left:859px;top:849px;width:131px;height:17px;background:#e8e8f2;"></div>
<div style="left:991px;top:849px;width:44px;height:17px;background:#e8e8f2;"></div>
<div style="left:1036px;top:849px;width:44px;height:17px;background:#e8e8f2;"></div>
<div style="left:1081px;top:849px;width:44px;height:17px;background:#e8e8f2;"></div>
<div style="left:1126px;top:849px;width:44px;height:17px;background:#e8e8f2;"></div>
<div style="left:1171px;top:849px;width:255px;height:17px;background:#e8e8f2;"></div>
<div style="left:1427px;top:849px;width:71px;height:17px;background:#e8e8f2;"></div>
<div style="left:1499px;top:849px;width:71px;height:17px;background:#e8e8f2;"></div>
<div style="left:1571px;top:849px;width:56px;height:17px;background:#e8e8f2;"></div>
<div class="gl" style="left:13px;top:866px;width:1635px;height:1px;"></div>
<div class="delg" style="left:1628px;top:849px;width:19px;height:17px;"></div>
<svg style="left:1628px;top:849px" width="19" height="17"><use href="#xg" width="19" height="17"/></svg>
<div style="left:52px;top:453px;width:1px;height:414px;background:#a9a9af;"></div>
<div style="left:245px;top:453px;width:1px;height:414px;background:#a9a9af;"></div>
<div style="left:491px;top:453px;width:1px;height:414px;background:#a9a9af;"></div>
<div style="left:726px;top:453px;width:1px;height:414px;background:#a9a9af;"></div>
<div style="left:858px;top:453px;width:1px;height:414px;background:#a9a9af;"></div>
<div style="left:990px;top:453px;width:1px;height:414px;background:#a9a9af;"></div>
<div style="left:1035px;top:453px;width:1px;height:414px;background:#a9a9af;"></div>
<div style="left:1080px;top:453px;width:1px;height:414px;background:#a9a9af;"></div>
<div style="left:1125px;top:453px;width:1px;height:414px;background:#a9a9af;"></div>
<div style="left:1170px;top:453px;width:1px;height:414px;background:#a9a9af;"></div>
<div style="left:1426px;top:453px;width:1px;height:414px;background:#a9a9af;"></div>
<div style="left:1498px;top:453px;width:1px;height:414px;background:#a9a9af;"></div>
<div style="left:1570px;top:453px;width:1px;height:414px;background:#a9a9af;"></div>
<div style="left:1627px;top:453px;width:1px;height:414px;background:#a9a9af;"></div>
<div style="left:1647px;top:453px;width:1px;height:414px;background:#c0c0c8;"></div>
<div style="left:1651px;top:454px;width:12px;height:15px;background:linear-gradient(#fcfcfd,#e7e7ec);"></div>
<svg style="left:1652px;top:458px" width="10" height="8" viewBox="0 0 10 8"><path d="M1 6.2 L5 2 L9 6.2" stroke="#d0d0d2" stroke-width="2" fill="none"/></svg>
<div class="red" style="left:242px;top:541px;width:486px;height:74px;"></div>
<div class="red" style="left:242px;top:613px;width:486px;height:92px;"></div>
<div class="red" style="left:1169px;top:613px;width:257px;height:93px;"></div>
<div class="red" style="left:1497px;top:613px;width:130px;height:93px;"></div>
<div class="red" style="left:1424px;top:416px;width:75px;height:290px;"></div>
</body></html>
